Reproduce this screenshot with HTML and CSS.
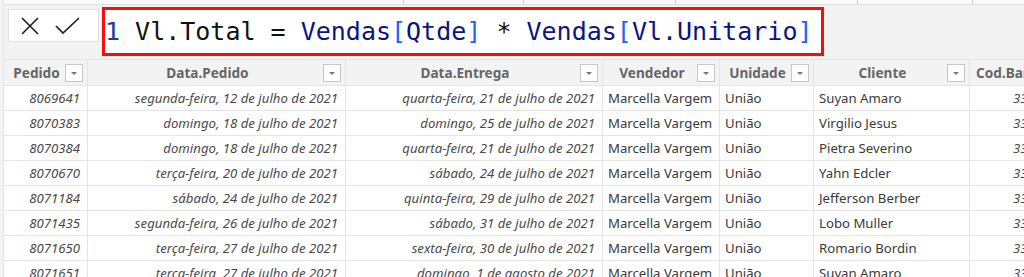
FILE: index.html
```html
<!DOCTYPE html>
<html lang="pt">
	<head>
		<meta charset="UTF-8">
		<title>Vl.Total</title>
		<link rel="stylesheet" href="styles.css">
	</head>
	<body>
		<div id="app">
			<div class="ruler">
				<span style="width:403px"></span>
				<span style="width:120px"></span>
				<span style="width:152px"></span>
				<span style="width:182px"></span>
				<span style="width:115px"></span>
			</div>
			<div class="formula-bar">
				<div class="actions">
					<button class="act" title="Cancelar">
						<svg width="20" height="20" viewBox="0 0 20 20"><path d="M2 2 L18 18 M18 2 L2 18" stroke="#222" stroke-width="1.7" fill="none"/></svg>
					</button>
					<button class="act" title="Confirmar">
						<svg width="25" height="18" viewBox="0 0 25 18"><path d="M1 9 L8 16 L24 1" stroke="#222" stroke-width="1.7" fill="none"/></svg>
					</button>
				</div>
				<div class="formula">
					<span class="ln">1</span> Vl.Total = <span class="tb">Vendas</span><span class="br">[</span><span class="tb">Qtde</span><span class="br">]</span> * <span class="tb">Vendas</span><span class="br">[</span><span class="tb">Vl.Unitario</span><span class="br">]</span>
				</div>
			</div>

			<div class="grid">
				<div class="row head">
					<div class="cell c1"><span class="lbl">Pedido</span><i class="dd"></i></div>
					<div class="cell c2"><span class="lbl">Data.Pedido</span><i class="dd"></i></div>
					<div class="cell c3"><span class="lbl">Data.Entrega</span><i class="dd"></i></div>
					<div class="cell c4"><span class="lbl">Vendedor</span><i class="dd"></i></div>
					<div class="cell c5"><span class="lbl">Unidade</span><i class="dd"></i></div>
					<div class="cell c6"><span class="lbl">Cliente</span><i class="dd"></i></div>
					<div class="cell c7"><span class="lbl">Cod.Barras</span></div>
				</div>
				<div id="rows"></div>
			</div>
		</div>
		<script>
			var dados = [
				["8069641", "segunda-feira, 12 de julho de 2021", "quarta-feira, 21 de julho de 2021", "Suyan Amaro"],
				["8070383", "domingo, 18 de julho de 2021", "domingo, 25 de julho de 2021", "Virgilio Jesus"],
				["8070384", "domingo, 18 de julho de 2021", "quarta-feira, 21 de julho de 2021", "Pietra Severino"],
				["8070670", "terça-feira, 20 de julho de 2021", "sábado, 24 de julho de 2021", "Yahn Edcler"],
				["8071184", "sábado, 24 de julho de 2021", "quinta-feira, 29 de julho de 2021", "Jefferson Berber"],
				["8071435", "segunda-feira, 26 de julho de 2021", "sábado, 31 de julho de 2021", "Lobo Muller"],
				["8071650", "terça-feira, 27 de julho de 2021", "sexta-feira, 30 de julho de 2021", "Romario Bordin"],
				["8071651", "terça-feira, 27 de julho de 2021", "domingo, 1 de agosto de 2021", "Suyan Amaro"]
			];
			var box = document.getElementById("rows");
			for (var i = 0; i < dados.length; i++) {
				var d = dados[i];
				var row = document.createElement("div");
				row.className = "row";
				row.innerHTML =
					'<div class="cell c1 num">' + d[0] + '</div>' +
					'<div class="cell c2 num">' + d[1] + '</div>' +
					'<div class="cell c3 num">' + d[2] + '</div>' +
					'<div class="cell c4">Marcella Vargem</div>' +
					'<div class="cell c5">União</div>' +
					'<div class="cell c6">' + d[3] + '</div>' +
					'<div class="cell c7 num">3301</div>';
				box.appendChild(row);
			}
		</script>
	</body>
</html>
```

FILE: styles.css
```css
* {
	margin: 0;
	padding: 0;
	box-sizing: border-box;
}

body {
	background-color: #f3f3f3;
	font-family: "Noto Sans", "Open Sans", sans-serif;
	overflow: hidden;
}

#app {
	width: 1024px;
	height: 277px;
	overflow: hidden;
	border-left: 1px solid #e3e3e3;
	margin-left: 3px;
}

/* faixa cortada no topo */
.ruler {
	display: flex;
	height: 5px;
	margin-left: -3px;
	background: #fafafa;
	border-bottom: 1px solid #e0e0e0;
}

.ruler span {
	flex: none;
	border-right: 1px solid #c8c8c8;
	height: 4px;
}

.formula-bar {
	display: flex;
	align-items: flex-start;
	height: 54px;
	padding-top: 2px;
}

.actions {
	display: flex;
	align-items: center;
	margin: 2px 0 0 4px;
	width: 91px;
	height: 33px;
	background: #fff;
	border: 1px solid #e1e1e1;
	padding-left: 11px;
	gap: 15px;
}

.act {
	border: none;
	background: none;
	display: flex;
}

.formula {
	margin-left: 3px;
	width: 722px;
	height: 49px;
	background: #fff;
	border: 3px solid #f01010;
	padding: 6px 0 0 0;
	font-family: "DejaVu Sans Mono", "Liberation Mono", monospace;
	font-size: 25px;
	line-height: 31px;
	color: #111;
	white-space: nowrap;
}

.ln {
	color: #1c3f94;
}

.tb {
	color: #0c1480;
}

.br {
	color: #1f5fff;
}

.grid {
	width: 1080px;
	background: #fff;
}

.row {
	display: flex;
	height: 25px;
	border-bottom: 1px solid #e4e4e4;
}

.row.head {
	height: 27px;
	background: #f3f3f3;
	border-top: 1px solid #e4e4e4;
}

.cell {
	flex: none;
	display: flex;
	align-items: center;
	padding: 0 5px;
	border-right: 1px solid #e4e4e4;
	font-size: 13.2px;
	color: #3a3a3a;
	white-space: nowrap;
	overflow: hidden;
}

.cell.num {
	justify-content: flex-end;
	font-style: italic;
	color: #4a4a4a;
	padding-right: 7px;
}

.head .cell {
	font-weight: bold;
	font-size: 13.6px;
	color: #666;
	padding: 0 4px 0 4px;
}

.head .lbl {
	flex: 1;
	text-align: center;
}

.head .c7 .lbl {
	text-align: left;
	padding-left: 2px;
}

.dd {
	flex: none;
	position: relative;
	width: 18px;
	height: 18px;
	background: #fff;
	border: 1px solid #c6c6c6;
}

.dd::after {
	content: "";
	position: absolute;
	left: 5px;
	top: 7px;
	border-left: 3px solid transparent;
	border-right: 3px solid transparent;
	border-top: 3px solid #777;
}

.c1 { width: 84px; }
.c2 { width: 258px; }
.c3 { width: 257px; }
.c4 { width: 117px; }
.c5 { width: 94px; }
.c6 { width: 156px; }
.c7 { width: 80px; }
```
